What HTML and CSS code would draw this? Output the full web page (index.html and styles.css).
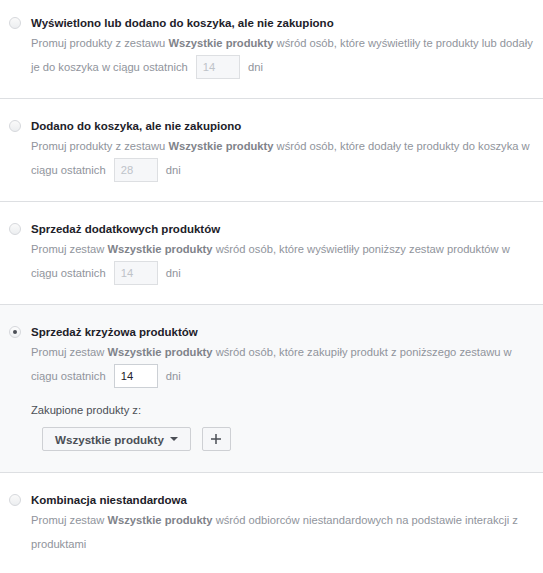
FILE: index.html
```html
<!DOCTYPE html>
<html lang="pl">
<head>
<meta charset="utf-8">
<link rel="stylesheet" href="styles.css">
</head>
<body>
<div class="list">
  <div class="option">
    <span class="radio"></span>
    <div class="body">
      <div class="title">Wyświetlono lub dodano do koszyka, ale nie zakupiono</div>
      <div class="desc">Promuj produkty z zestawu <b>Wszystkie produkty</b> wśród osób, które wyświetliły te produkty lub dodały<br>je do koszyka w ciągu ostatnich <span class="num disabled">14</span> dni</div>
    </div>
  </div>
  <div class="option">
    <span class="radio"></span>
    <div class="body">
      <div class="title">Dodano do koszyka, ale nie zakupiono</div>
      <div class="desc">Promuj produkty z zestawu <b>Wszystkie produkty</b> wśród osób, które dodały te produkty do koszyka w<br>ciągu ostatnich <span class="num disabled">28</span> dni</div>
    </div>
  </div>
  <div class="option">
    <span class="radio"></span>
    <div class="body">
      <div class="title">Sprzedaż dodatkowych produktów</div>
      <div class="desc">Promuj zestaw <b>Wszystkie produkty</b> wśród osób, które wyświetliły poniższy zestaw produktów w<br>ciągu ostatnich <span class="num disabled">14</span> dni</div>
    </div>
  </div>
  <div class="option selected">
    <span class="radio checked"></span>
    <div class="body">
      <div class="title">Sprzedaż krzyżowa produktów</div>
      <div class="desc">Promuj zestaw <b>Wszystkie produkty</b> wśród osób, które zakupiły produkt z poniższego zestawu w<br>ciągu ostatnich <span class="num">14</span> dni</div>
      <div class="label">Zakupione produkty z:</div>
      <div class="actions">
        <button class="btn">Wszystkie produkty <span class="caret"></span></button>
        <button class="btn plus"><svg width="10" height="10" viewBox="0 0 10 10"><path d="M5 0v10M0 5h10" stroke="#4b4f56" stroke-width="1.5"/></svg></button>
      </div>
    </div>
  </div>
  <div class="option last">
    <span class="radio"></span>
    <div class="body">
      <div class="title">Kombinacja niestandardowa</div>
      <div class="desc">Promuj zestaw <b>Wszystkie produkty</b> wśród odbiorców niestandardowych na podstawie interakcji z<br>produktami</div>
    </div>
  </div>
</div>
</body>
</html>
```
FILE: styles.css
```css
html, body {
  margin: 0;
  padding: 0;
  background: #fff;
}
body {
  font-family: "Liberation Sans", Arial, sans-serif;
  font-size: 11.2px;
  color: #1d2129;
}
.option {
  display: grid;
  grid-template-columns: 12px 1fr;
  column-gap: 10px;
  padding: 19px 0 19px 9px;
  border-bottom: 1px solid #dddfe2;
}
.option:first-child {
  padding-top: 15px;
}
.option.selected {
  padding-bottom: 21px;
  background: #f8f9fa;
}
.option.last {
  border-bottom: none;
}
.radio {
  width: 12px;
  height: 12px;
  box-sizing: border-box;
  border-radius: 50%;
  border: 1px solid #d6d8dc;
  background: linear-gradient(#fafafa, #eceef0);
  margin-top: 2px;
  position: relative;
}
.radio.checked {
  background: linear-gradient(#fdfdfd, #eef0f2);
}
.radio.checked::after {
  content: "";
  position: absolute;
  left: 3px;
  top: 3px;
  width: 4px;
  height: 4px;
  border-radius: 50%;
  background: #4b4f56;
}
.title {
  font-weight: bold;
  font-size: 11.5px;
  line-height: 16px;
  color: #1d2129;
}
.desc {
  line-height: 24px;
  color: #90949c;
  white-space: nowrap;
}
.desc b {
  color: #7f838a;
}
.num {
  display: inline-block;
  box-sizing: border-box;
  width: 44px;
  height: 24px;
  line-height: 22px;
  padding: 0 6px;
  margin: 0 5px;
  vertical-align: top;
  border: 1px solid #ccd0d5;
  background: #fff;
  color: #1d2129;
}
.num.disabled {
  background: #f6f7f9;
  border-color: #dddfe2;
  color: #bec3c9;
}
.label {
  margin-top: 14px;
  line-height: 16px;
  color: #4b4f56;
}
.actions {
  display: flex;
  gap: 11px;
  margin-top: 9px;
  margin-left: 11px;
}
.btn {
  display: flex;
  align-items: center;
  justify-content: center;
  box-sizing: border-box;
  height: 24px;
  padding: 0 12px;
  border: 1px solid #ced0d4;
  border-radius: 2px;
  background: #f6f7f9;
  font-family: inherit;
  font-size: 11.6px;
  font-weight: bold;
  color: #4b4f56;
}
.btn.plus {
  width: 29px;
  padding: 0;
}
.caret {
  display: inline-block;
  width: 0;
  height: 0;
  margin-left: 6px;
  border-left: 4px solid transparent;
  border-right: 4px solid transparent;
  border-top: 4px solid #4b4f56;
}
```
